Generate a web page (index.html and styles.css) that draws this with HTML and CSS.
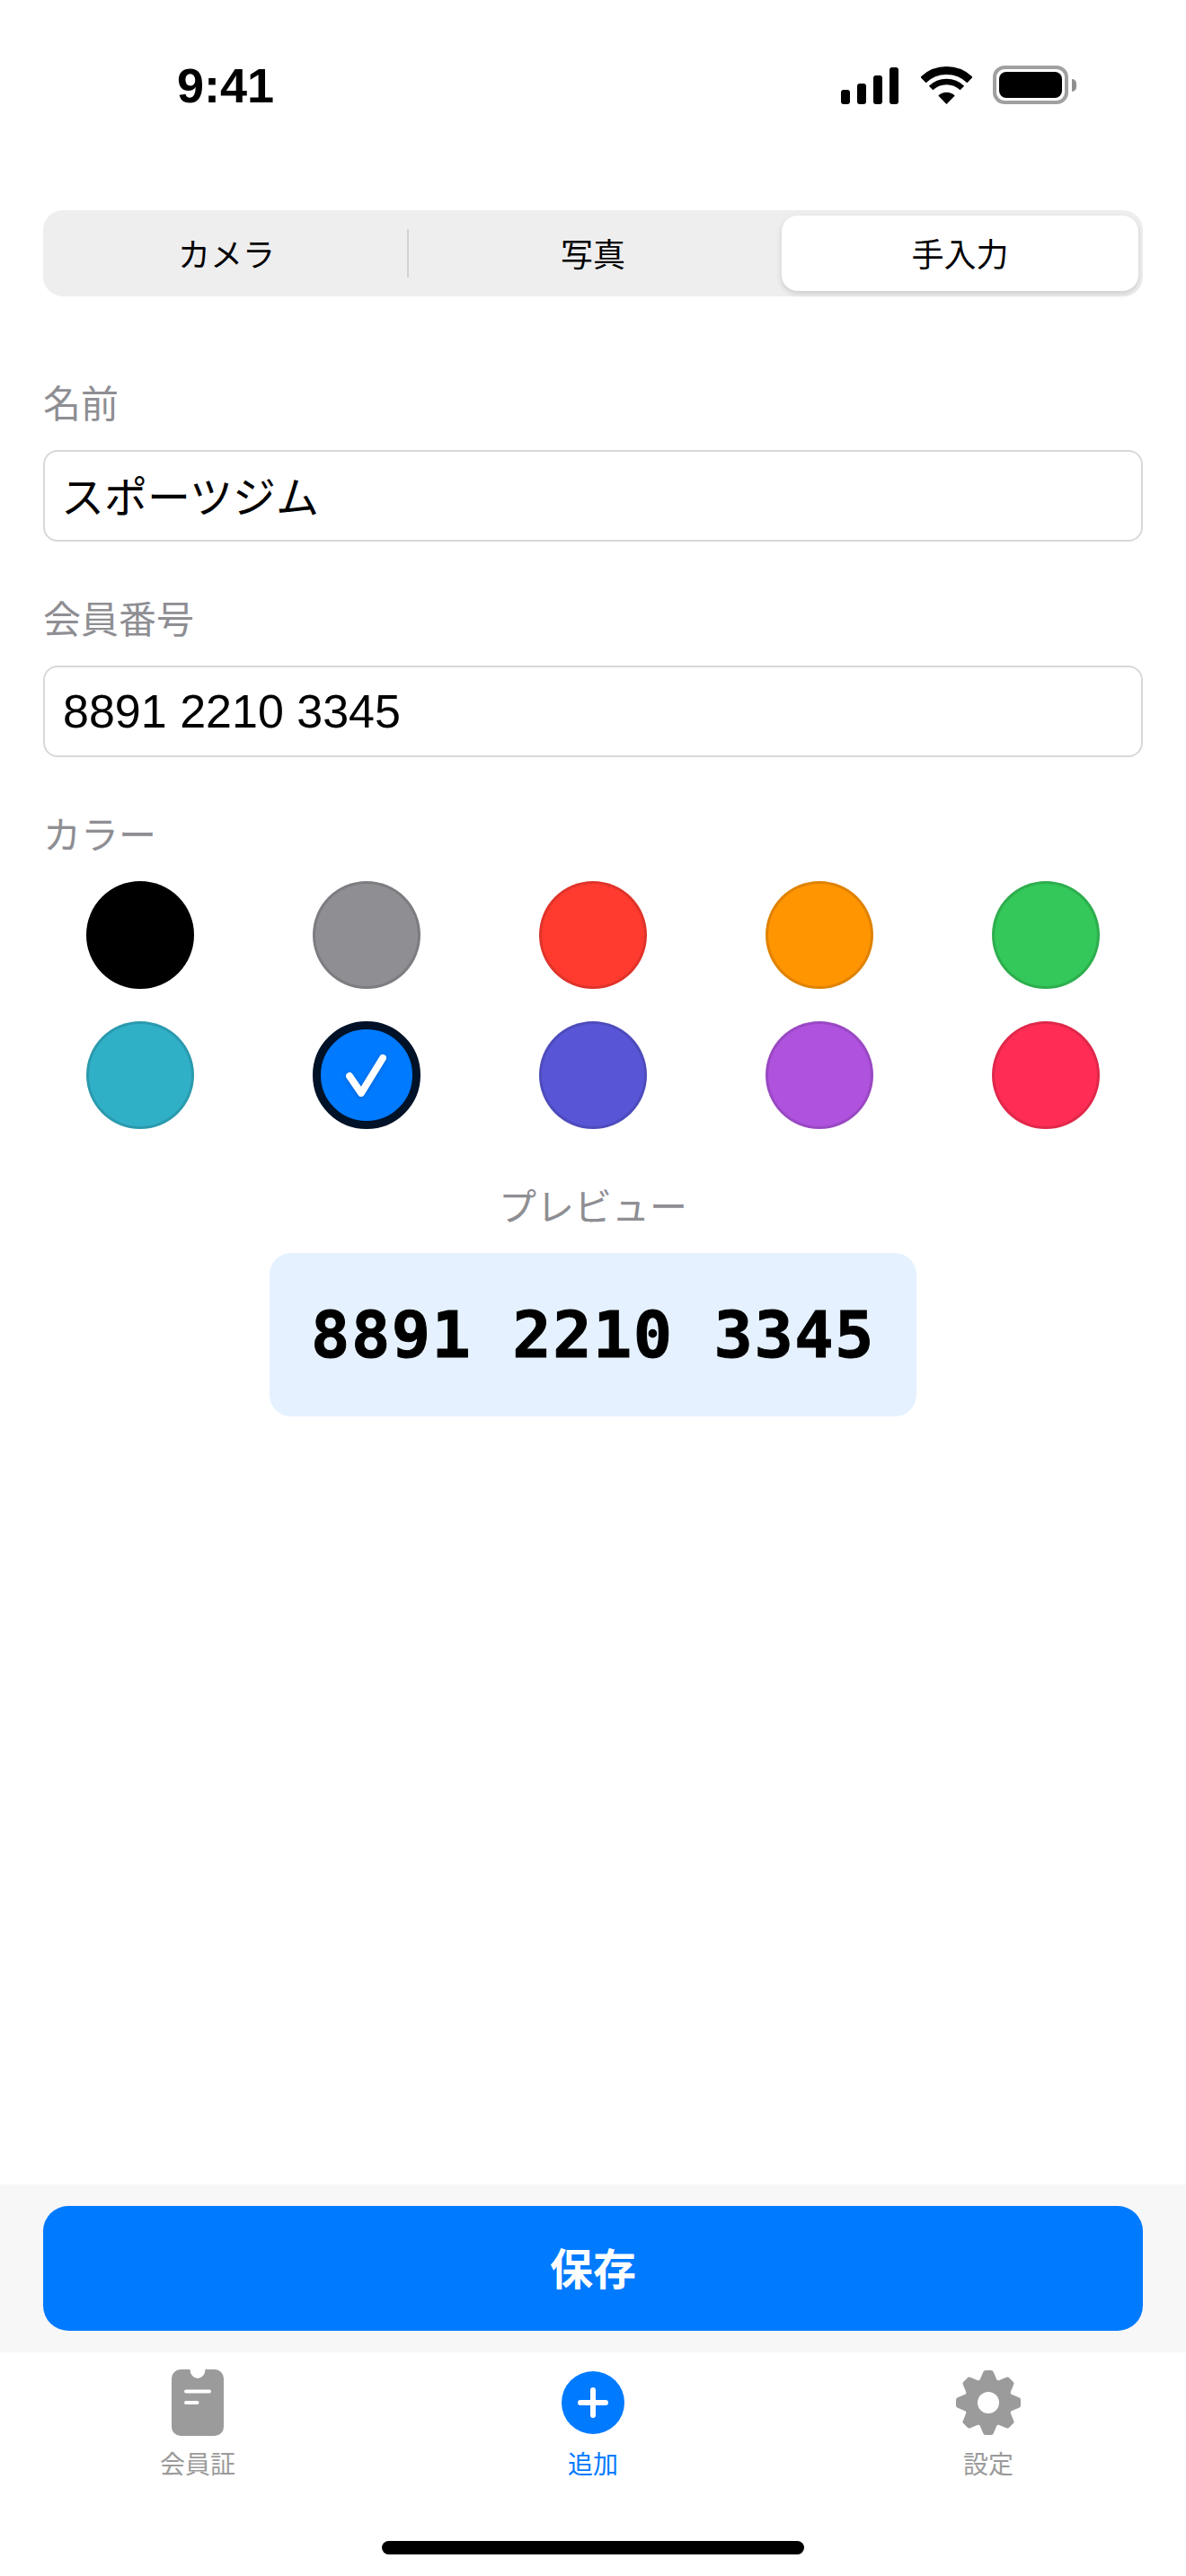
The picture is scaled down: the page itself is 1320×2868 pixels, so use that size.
FILE: index.html

```html
<!DOCTYPE html>
<html lang="ja">
<head>
  <meta charset="UTF-8" />
  <meta name="viewport" content="width=device-width, initial-scale=1.0"/>
  <title>追加</title>
  <link rel="stylesheet" href="styles.css">
</head>
<body>
  <!-- Status bar -->
  <header class="status-bar">
    <span class="status-time">9:41</span>
    <div class="status-icons">
      <div class="signal">
        <span class="signal-bar bar-1"></span>
        <span class="signal-bar bar-2"></span>
        <span class="signal-bar bar-3"></span>
        <span class="signal-bar bar-4"></span>
      </div>
      <svg class="wifi" width="57" height="42" viewBox="0 0 57 42" aria-hidden="true">
        <path d="M2.45 15.03A37.5 37.5 0 0 1 54.55 15.03" fill="none" stroke="#000" stroke-width="9"/>
        <path d="M11.1 24A25 25 0 0 1 45.9 24" fill="none" stroke="#000" stroke-width="6.5"/>
        <path d="M28.5 42L19.3 32.4A13.3 13.3 0 0 1 37.7 32.4Z" fill="#000"/>
      </svg>
      <div class="battery">
        <div class="battery-body"><span class="battery-level"></span></div>
        <span class="battery-nub"></span>
      </div>
    </div>
  </header>

  <main class="content">
    <div class="segments">
      <div class="segment segment-divider">カメラ</div>
      <div class="segment">写真</div>
      <div class="segment segment-active">手入力</div>
    </div>

    <div class="field field-name">
      <div class="field-label">名前</div>
      <div class="field-input field-input-name">スポーツジム</div>
    </div>

    <div class="field field-number">
      <div class="field-label">会員番号</div>
      <div class="field-input field-input-number">8891 2210 3345</div>
    </div>

    <div class="field field-color">
      <div class="field-label">カラー</div>
      <div class="swatches">
        <span class="swatch swatch-black"></span>
        <span class="swatch swatch-gray"></span>
        <span class="swatch swatch-red"></span>
        <span class="swatch swatch-orange"></span>
        <span class="swatch swatch-green"></span>
        <span class="swatch swatch-teal"></span>
        <span class="swatch swatch-blue swatch-selected">
          <svg width="60" height="60" viewBox="0 0 60 60" aria-hidden="true">
            <path class="swatch-check" d="M11 31L24 50L48 11"/>
          </svg>
        </span>
        <span class="swatch swatch-indigo"></span>
        <span class="swatch swatch-purple"></span>
        <span class="swatch swatch-pink"></span>
      </div>
    </div>

    <section class="preview">
      <div class="field-label">プレビュー</div>
      <div class="preview-card">8891 2210 3345</div>
    </section>
  </main>

  <!-- Save button band -->
  <div class="save-band">
    <button class="save-button">保存</button>
  </div>

  <!-- Tab bar -->
  <nav class="tab-bar">
    <div class="tab">
      <svg width="58" height="74" viewBox="0 0 58 74" aria-hidden="true">
        <path d="M10 0H20.5A8.5 10 0 0 0 37.5 0H48A10 10 0 0 1 58 10V64A10 10 0 0 1 48 74H10A10 10 0 0 1 0 64V10A10 10 0 0 1 10 0Z" fill="#9b9b9b"/>
        <rect x="14" y="22.5" width="30" height="4" rx="2" fill="#fff"/>
        <rect x="14" y="35" width="16.5" height="4" rx="2" fill="#fff"/>
      </svg>
      <span class="tab-label">会員証</span>
    </div>
    <div class="tab tab-active">
      <svg width="72" height="72" viewBox="0 0 72 72" aria-hidden="true">
        <circle cx="36" cy="36" r="35" fill="#007aff"/>
        <path d="M36 22V50M22 36H50" fill="none" stroke="#fff" stroke-width="6" stroke-linecap="round"/>
      </svg>
      <span class="tab-label">追加</span>
    </div>
    <div class="tab">
      <svg width="72" height="72" viewBox="-36 -36 72 72" aria-hidden="true">
        <defs>
          <path id="gear-tooth" d="M-10 -24L-6 -33.5Q-5.5 -36 -3 -36H3Q5.5 -36 6 -33.5L10 -24Z"/>
        </defs>
        <g fill="#9b9b9b">
          <circle r="27"/>
          <use href="#gear-tooth"/>
          <use href="#gear-tooth" transform="rotate(45)"/>
          <use href="#gear-tooth" transform="rotate(90)"/>
          <use href="#gear-tooth" transform="rotate(135)"/>
          <use href="#gear-tooth" transform="rotate(180)"/>
          <use href="#gear-tooth" transform="rotate(225)"/>
          <use href="#gear-tooth" transform="rotate(270)"/>
          <use href="#gear-tooth" transform="rotate(315)"/>
        </g>
        <circle r="12" fill="#fff"/>
      </svg>
      <span class="tab-label">設定</span>
    </div>
  </nav>

  <div class="home-indicator"></div>
</body>
</html>
```

FILE: styles.css

```css
:root {
  --blue: #007aff;
  --label: #8e8e93;
  --tab-gray: #9b9b9b;
  --cjk: "Noto Sans CJK JP", "Liberation Sans", sans-serif;
}

* {
  box-sizing: border-box;
}

body {
  margin: 0;
  width: 1320px;
  height: 2868px;
  background: #fff;
  color: #000;
  font-family: "Liberation Sans", "Noto Sans CJK JP", sans-serif;
  display: flex;
  flex-direction: column;
  overflow: hidden;
}

/* Status bar */
.status-bar {
  height: 234px;
  flex-shrink: 0;
  padding: 64px 122px 0 197px;
  display: flex;
  justify-content: space-between;
  align-items: flex-start;
}

.status-time {
  font-size: 54px;
  line-height: 62px;
  font-weight: 700;
}

.status-icons {
  display: flex;
  align-items: flex-end;
  height: 43px;
  margin-top: 9px;
}

.signal {
  display: flex;
  align-items: flex-end;
  gap: 7.5px;
  margin-right: 25px;
}

.signal-bar {
  width: 10.5px;
  background: #000;
  border-radius: 3px;
}

.bar-1 { height: 16px; }
.bar-2 { height: 23px; }
.bar-3 { height: 32px; }
.bar-4 { height: 41px; }

.wifi {
  display: block;
  margin-right: 23px;
}

.battery {
  display: flex;
  align-items: center;
  gap: 4px;
}

.battery-body {
  width: 84px;
  height: 43px;
  border: 4px solid #a0a0a0;
  border-radius: 13px;
  padding: 3px;
}

.battery-level {
  display: block;
  height: 100%;
  background: #000;
  border-radius: 8px;
}

.battery-nub {
  width: 5px;
  height: 14px;
  background: #8f8f8f;
  border-radius: 0 5px 5px 0;
}

/* Main form */
.content {
  flex: 1;
  padding: 0 48px;
  display: flex;
  flex-direction: column;
}

.segments {
  height: 96px;
  background: #eeeeef;
  border-radius: 22px;
  display: grid;
  grid-template-columns: repeat(3, 1fr);
  flex-shrink: 0;
}

.segment {
  position: relative;
  display: flex;
  align-items: center;
  justify-content: center;
  padding-bottom: 3px;
  font-family: var(--cjk);
  font-size: 36px;
  font-weight: 400;
}

.segment-divider::after {
  content: '';
  position: absolute;
  right: 1px;
  top: 21px;
  bottom: 21px;
  width: 2px;
  background: #d2d2d4;
}

.segment-active {
  margin: 6px 5px 6px 6px;
  background: #fff;
  border-radius: 18px;
  box-shadow: 0 3px 6px rgba(0, 0, 0, 0.14);
}

.field-name {
  margin-top: 93px;
}

.field-number {
  margin-top: 60px;
}

.field-color {
  margin-top: 60px;
}

.field-label {
  font-family: var(--cjk);
  font-size: 42px;
  line-height: 48px;
  color: var(--label);
}

.field-input {
  margin-top: 30px;
  height: 102px;
  border: 2px solid #d8d8dc;
  border-radius: 16px;
  padding: 0 18px;
  display: flex;
  align-items: center;
  font-family: var(--cjk);
  font-size: 48px;
}

.field-input-name {
  padding-bottom: 5px;
}

.field-input-number {
  padding: 0 20px;
  font-family: "Liberation Sans", sans-serif;
  font-size: 52px;
}

/* Colour swatches */
.swatches {
  margin-top: 30px;
  padding: 0 48px;
  display: grid;
  grid-template-columns: repeat(5, 120px);
  justify-content: space-between;
  row-gap: 36px;
}

.swatch {
  width: 120px;
  height: 120px;
  border-radius: 50%;
  border: 3px solid rgba(0, 0, 0, 0.12);
  display: flex;
  align-items: center;
  justify-content: center;
}

.swatch-black { background: #000; }
.swatch-gray { background: #8e8e93; }
.swatch-red { background: #ff3b30; }
.swatch-orange { background: #ff9500; }
.swatch-green { background: #34c759; }
.swatch-teal { background: #30b0c7; }
.swatch-blue { background: var(--blue); }
.swatch-indigo { background: #5856d6; }
.swatch-purple { background: #af52de; }
.swatch-pink { background: #ff2d55; }

.swatch-selected {
  border: 9px solid #001228;
}

.swatch-check {
  fill: none;
  stroke: #fff;
  stroke-width: 8;
  stroke-linecap: round;
  stroke-linejoin: round;
  filter: drop-shadow(0 1px 2px rgba(0, 0, 0, 0.2));
}

/* Preview */
.preview {
  margin-top: 60px;
  display: flex;
  flex-direction: column;
  align-items: center;
}

.preview-card {
  margin-top: 30px;
  width: 720px;
  height: 182px;
  background: #e5f1ff;
  border-radius: 24px;
  display: flex;
  align-items: center;
  justify-content: center;
  font-family: "DejaVu Sans Mono", "Liberation Mono", monospace;
  font-size: 72px;
  font-weight: 700;
  letter-spacing: 1.5px;
  -webkit-text-stroke: 1px #000;
  white-space: pre;
}

/* Save */
.save-band {
  height: 187px;
  flex-shrink: 0;
  background: #f7f7f7;
  padding: 24px 48px;
}

.save-button {
  display: flex;
  align-items: center;
  justify-content: center;
  width: 100%;
  height: 139px;
  border: none;
  border-radius: 28px;
  padding: 0 0 5px;
  background: var(--blue);
  color: #fff;
  font-family: var(--cjk);
  font-size: 48px;
  font-weight: 700;
}

/* Tab bar */
.tab-bar {
  height: 249px;
  flex-shrink: 0;
  padding-top: 19px;
  display: grid;
  grid-template-columns: repeat(3, 1fr);
  align-content: start;
}

.tab {
  height: 140px;
  display: flex;
  flex-direction: column;
  align-items: center;
  color: var(--tab-gray);
}

.tab svg {
  display: block;
  height: 74px;
}

.tab-label {
  margin-top: 13px;
  font-family: var(--cjk);
  font-size: 28px;
  line-height: 34px;
}

.tab-active {
  color: var(--blue);
}

.home-indicator {
  position: absolute;
  left: 425px;
  top: 2829px;
  width: 470px;
  height: 15px;
  background: #000;
  border-radius: 8px;
}
```
